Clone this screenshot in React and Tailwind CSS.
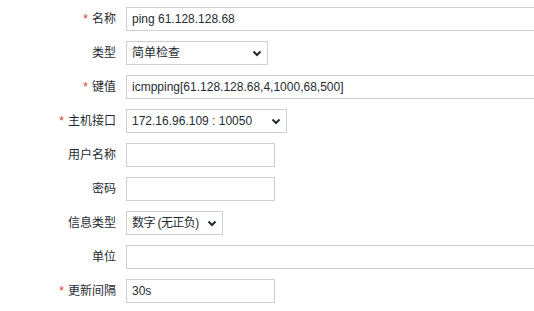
import React from 'react';

const FONT = { fontFamily: '"Liberation Sans", "Noto Sans CJK SC", Arial, sans-serif' };

function Chevron() {
  return (
    <svg width="10" height="7" viewBox="0 0 10 7" className="shrink-0">
      <path d="M1.5 1.5 L5 5 L8.5 1.5" fill="none" stroke="#1f2c33" strokeWidth="2" />
    </svg>
  );
}

function Field({ value, width }) {
  return (
    <div
      className="h-[24px] border border-[#cfcfcf] bg-white flex items-center px-[5px] text-[12px] text-[#1f2c33] shrink-0 whitespace-nowrap overflow-hidden"
      style={{ width }}
    >
      {value}
    </div>
  );
}

function Select({ value, width, tight }) {
  return (
    <div
      className="h-[24px] border border-[#cfcfcf] bg-white flex items-center justify-between pl-[5px] pr-[5px] text-[12px] text-[#1f2c33] shrink-0 whitespace-nowrap"
      style={{ width }}
    >
      <span className={tight ? 'tracking-[-0.6px]' : ''}>{value}</span>
      <Chevron />
    </div>
  );
}

const rows = [
  { label: '名称', req: true, kind: 'field', value: 'ping 61.128.128.68', width: 460 },
  { label: '类型', kind: 'select', value: '简单检查', width: 142 },
  { label: '键值', req: true, kind: 'field', value: 'icmpping[61.128.128.68,4,1000,68,500]', width: 460 },
  { label: '主机接口', req: true, kind: 'select', value: '172.16.96.109 : 10050', width: 161 },
  { label: '用户名称', kind: 'field', value: '', width: 149 },
  { label: '密码', kind: 'field', value: '', width: 149 },
  { label: '信息类型', kind: 'select', value: '数字 (无正负)', width: 97, tight: true },
  { label: '单位', kind: 'field', value: '', width: 460 },
  { label: '更新间隔', req: true, kind: 'field', value: '30s', width: 149 },
];

export default function App() {
  return (
    <div className="w-[534px] h-[311px] bg-white overflow-hidden pt-[7px]" style={FONT}>
      <div className="flex flex-col gap-[10px]">
        {rows.map((r) => (
          <div key={r.label} className="flex items-center gap-[10px]">
            <div className="w-[116px] shrink-0 flex justify-end items-center text-[12px] text-[#1f2c33]">
              {r.req && <span className="text-[#e33734] mr-[4px] text-[12px]">*</span>}
              <span>{r.label}</span>
            </div>
            {r.kind === 'select' ? (
              <Select value={r.value} width={r.width} tight={r.tight} />
            ) : (
              <Field value={r.value} width={r.width} />
            )}
          </div>
        ))}
      </div>
    </div>
  );
}
